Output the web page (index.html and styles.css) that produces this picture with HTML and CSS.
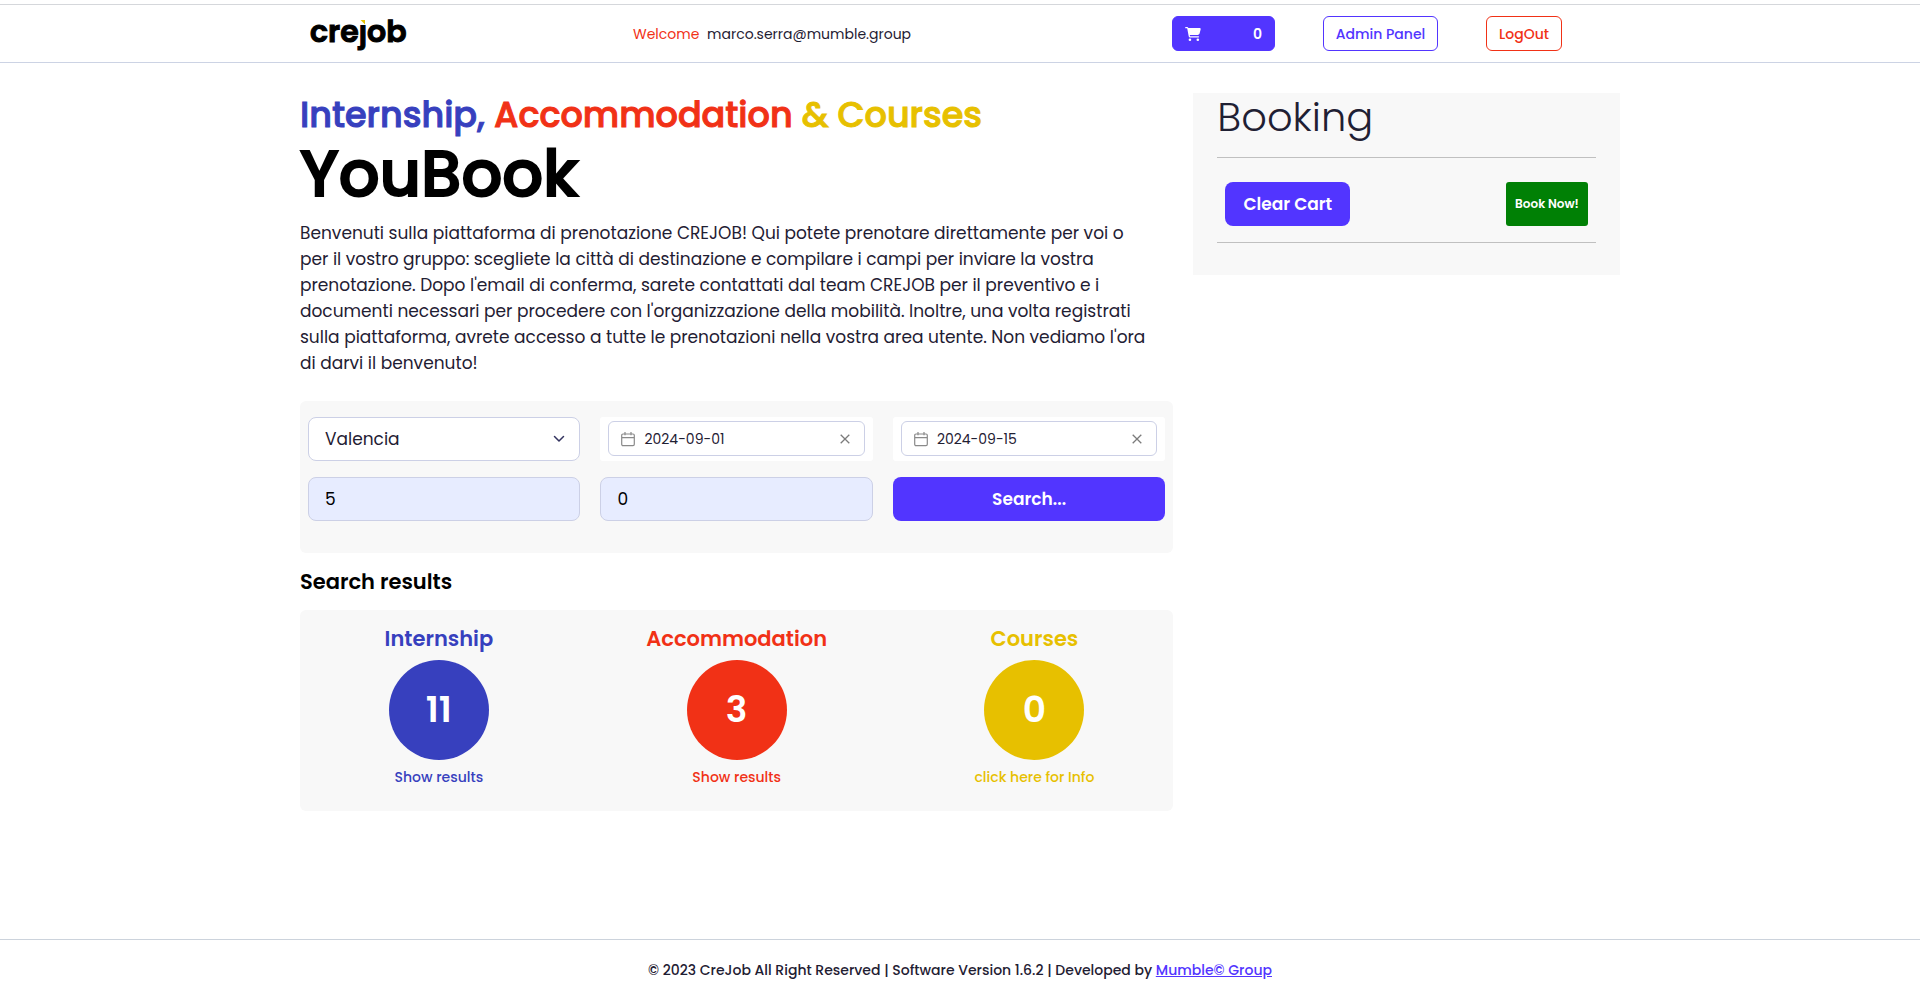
FILE: index.html
```html
<!DOCTYPE html>
<html lang="it">
<head>
<meta charset="utf-8">
<meta name="viewport" content="width=device-width, initial-scale=1">
<title>CreJob YouBook</title>
<link rel="stylesheet" href="styles.css">
</head>
<body>
<header class="site-header">
  <div class="container header-row">
    <a class="logo" href="#">cre<span class="logo-j">j</span>ob</a>
    <p class="welcome"><span class="red">Welcome</span> marco.serra@mumble.group</p>
    <nav class="actions">
      <button class="btn-small cart" type="button" aria-label="Cart">
        <svg width="16" height="14" viewBox="0 0 576 512" aria-hidden="true"><path fill="currentColor" d="M0 24C0 10.7 10.7 0 24 0H69.5c22 0 41.5 12.800 50.600 32h411c26.300 0 45.500 25 38.600 50.400l-41 152.300c-8.500 31.400-37 53.300-69.500 53.300H170.700l5.400 28.500c2.200 11.300 12.100 19.500 23.600 19.500H488c13.300 0 24 10.700 24 24s-10.700 24-24 24H199.700c-34.600 0-64.300-24.600-70.700-58.500L77.400 54.500c-.7-3.800-4-6.500-7.900-6.500H24C10.700 48 0 37.300 0 24zM128 464a48 48 0 1 1 96 0 48 48 0 1 1-96 0zm336-48a48 48 0 1 1 0 96 48 48 0 1 1 0-96z"/></svg>
        <span>0</span>
      </button>
      <button class="btn-small admin" type="button">Admin Panel</button>
      <button class="btn-small logout" type="button">LogOut</button>
    </nav>
  </div>
</header>

<main class="container layout">
  <div class="column">
    <h2 class="tagline"><span class="blue">Internship,</span> <span class="red">Accommodation</span> <span class="yellow">&amp; Courses</span></h2>
    <h1 class="title">YouBook</h1>
    <p class="intro">Benvenuti sulla piattaforma di prenotazione CREJOB! Qui potete prenotare direttamente per voi o<br>
      per il vostro gruppo: scegliete la città di destinazione e compilare i campi per inviare la vostra<br>
      prenotazione. Dopo l'email di conferma, sarete contattati dal team CREJOB per il preventivo e i<br>
      documenti necessari per procedere con l'organizzazione della mobilità. Inoltre, una volta registrati<br>
      sulla piattaforma, avrete accesso a tutte le prenotazioni nella vostra area utente. Non vediamo l'ora<br>
      di darvi il benvenuto!</p>

    <form class="panel search">
      <div class="select-wrap">
        <select class="field" aria-label="City"><option>Valencia</option></select>
        <svg class="chevron" width="12" height="8" viewBox="0 0 12 8" aria-hidden="true"><path d="M1.500 1.500 6 6l4.500-4.500" fill="none" stroke="#33335f" stroke-width="1.500" stroke-linecap="round" stroke-linejoin="round"/></svg>
      </div>
      <div class="date-wrap">
        <div class="date">
          <svg width="14" height="16" viewBox="0 0 14 16" aria-hidden="true"><path d="M2 3h10a1.300 1.300 0 0 1 1.300 1.300v9A1.300 1.300 0 0 1 12 14.600H2a1.300 1.300 0 0 1-1.300-1.300v-9A1.300 1.300 0 0 1 2 3zM.7 6.700h12.600M4 1v3.200M10 1v3.200" fill="none" stroke="#8a8a8a" stroke-width="1.200"/></svg>
          <input type="text" value="2024-09-01" aria-label="Start date">
          <button type="button" class="clear" aria-label="Clear start date"><svg width="10" height="10" viewBox="0 0 10 10"><path d="M.7.7l8.600 8.600M9.300.7.7 9.300" stroke="#7b7b7b" stroke-width="1.300"/></svg></button>
        </div>
      </div>
      <div class="date-wrap">
        <div class="date">
          <svg width="14" height="16" viewBox="0 0 14 16" aria-hidden="true"><path d="M2 3h10a1.300 1.300 0 0 1 1.300 1.300v9A1.300 1.300 0 0 1 12 14.600H2a1.300 1.300 0 0 1-1.300-1.300v-9A1.300 1.300 0 0 1 2 3zM.7 6.700h12.600M4 1v3.200M10 1v3.200" fill="none" stroke="#8a8a8a" stroke-width="1.200"/></svg>
          <input type="text" value="2024-09-15" aria-label="End date">
          <button type="button" class="clear" aria-label="Clear end date"><svg width="10" height="10" viewBox="0 0 10 10"><path d="M.7.7l8.600 8.600M9.300.7.7 9.300" stroke="#7b7b7b" stroke-width="1.300"/></svg></button>
        </div>
      </div>
      <input class="field filled" type="text" value="5" aria-label="Students">
      <input class="field filled" type="text" value="0" aria-label="Teachers">
      <button class="btn" type="button">Search...</button>
    </form>

    <h3 class="results-title">Search results</h3>
    <section class="panel results">
      <article class="result blue"><h4>Internship</h4><div class="count">11</div><a href="#">Show results</a></article>
      <article class="result red"><h4>Accommodation</h4><div class="count">3</div><a href="#">Show results</a></article>
      <article class="result yellow"><h4>Courses</h4><div class="count">0</div><a href="#">click here for Info</a></article>
    </section>
  </div>

  <aside class="column">
    <div class="booking">
      <h2>Booking</h2>
      <div class="booking-actions">
        <button class="btn" type="button">Clear Cart</button>
        <button class="book-now" type="button">Book Now!</button>
      </div>
    </div>
  </aside>
</main>

<footer class="site-footer">© 2023 CreJob All Right Reserved | Software Version 1.6.2 | Developed by <a href="#">Mumble© Group</a></footer>
</body>
</html>
```
FILE: styles.css
```css
* { box-sizing: border-box; }
body {
  margin: 0;
  min-height: 100vh;
  display: flex;
  flex-direction: column;
  background: #fff;
  color: #1f2033;
  font-family: Poppins, Inter, sans-serif;
  font-size: 14px;
  line-height: 20px;
}
h1, h2, h3, h4, p { margin: 0; }
button, input, select { font: inherit; color: inherit; }
button { cursor: pointer; padding: 0; border: 0; }
.blue { color: #3740be; }
.red { color: #f13116; }
.yellow { color: #e7c000; }
.container { width: 100%; max-width: 1340px; margin: 0 auto; }

.site-header {
  margin-top: 4px;
  border-top: 1px solid #d5d7db;
  border-bottom: 1px solid #ccd3e4;
}
.header-row {
  display: grid;
  grid-template-columns: 25% 1fr auto;
  align-items: center;
  min-height: 57px;
  padding: 0 68px 0 20px;
}
.logo {
  padding-bottom: 4px;
  color: #000;
  font-size: 30px;
  font-weight: 600;
  line-height: 36px;
  text-decoration: none;
  -webkit-text-stroke: 1px #000;
}
.logo-j { position: relative; }
.logo-j::before {
  content: "";
  position: absolute;
  top: 4px;
  left: 0;
  width: 100%;
  height: 11px;
  background: #fff;
}
.logo-j::after {
  content: "";
  position: absolute;
  top: 10px;
  right: 2px;
  width: 5px;
  height: 5px;
  background: #e7c000;
  clip-path: polygon(0 0, 100% 0, 100% 100%);
}
.welcome { padding-left: 10px; white-space: nowrap; }
.welcome .red { margin-right: 4px; }
.actions { display: flex; gap: 48px; }
.btn-small {
  height: 35px;
  border: 1px solid currentColor;
  border-radius: 6px;
  background: #fff;
  font-weight: 500;
  white-space: nowrap;
}
.cart {
  display: flex;
  align-items: center;
  justify-content: space-between;
  width: 103px;
  padding: 0 12px;
  background: #5235ff;
  border-color: #5235ff;
  color: #fff;
  font-weight: 600;
}
.admin { width: 115px; color: #5235ff; }
.logout { width: 76px; color: #f13116; }

.layout {
  display: grid;
  grid-template-columns: 2fr 1fr;
  align-items: start;
  padding-top: 30px;
}
.column { min-width: 0; padding: 0 10px; }
.tagline {
  font-size: 35px;
  font-weight: 500;
  line-height: 43px;
  -webkit-text-stroke: 1px;
}
.title {
  margin-bottom: 8px;
  color: #000;
  font-size: 64px;
  font-weight: 500;
  line-height: 76px;
  -webkit-text-stroke: 2px;
}
.intro {
  margin-bottom: 25px;
  font-size: 17px;
  line-height: 26px;
}
.panel { border-radius: 6px; background: #f8f8f8; }
.search {
  display: grid;
  grid-template-columns: repeat(3, minmax(0, 1fr));
  gap: 16px 20px;
  padding: 16px 8px 32px;
}
.select-wrap { position: relative; }
.chevron { position: absolute; right: 15px; top: 18px; pointer-events: none; }
.field {
  display: block;
  width: 100%;
  height: 44px;
  padding: 0 16px;
  border: 1px solid #ccd0e6;
  border-radius: 8px;
  background: #fff;
  font-size: 17px;
  appearance: none;
}
.filled { background: #e7ecff; color: #000; }
.date-wrap { padding: 4px 8px; border-radius: 3px; background: #fff; }
.date {
  display: flex;
  align-items: center;
  gap: 9px;
  height: 35px;
  padding: 0 14px 0 12px;
  border: 1px solid #ccd0e6;
  border-radius: 6px;
}
.date input { flex: 1; min-width: 0; padding: 0; border: 0; background: none; }
.clear { display: flex; background: none; }
.btn {
  height: 44px;
  border-radius: 8px;
  background: #5235ff;
  color: #fff;
  font-size: 17px;
  font-weight: 600;
}
.results-title {
  margin: 14px 0;
  color: #000;
  font-size: 21px;
  font-weight: 600;
  line-height: 29px;
}
.results {
  display: grid;
  grid-template-columns: repeat(3, minmax(0, 1fr));
  column-gap: 20px;
  padding: 16px 0 24px;
}
.result {
  display: flex;
  flex-direction: column;
  align-items: center;
}
.result h4 { margin-bottom: 8px; font-size: 21px; font-weight: 600; line-height: 26px; }
.result a { margin-top: 7px; color: inherit; font-weight: 500; text-decoration: none; }
.count {
  width: 100px;
  border-radius: 50%;
  background: currentColor;
  font-size: 36px;
  font-weight: 600;
  line-height: 100px;
  text-align: center;
}
.count::first-line { color: #fff; }

.booking { padding: 0 24px 32px; background: #f8f8f8; }
.booking h2 { padding-bottom: 16px; font-size: 40px; font-weight: 300; line-height: 48px; }
.booking-actions {
  display: flex;
  justify-content: space-between;
  padding: 24px 8px 16px;
  border-top: 1px solid #c0c0c0;
  border-bottom: 1px solid #c0c0c0;
}
.booking-actions .btn { width: 125px; }
.book-now {
  width: 82px;
  border-radius: 3px;
  background: #008005;
  color: #fff;
  font-size: 12px;
  font-weight: 600;
}

.site-footer {
  margin-top: auto;
  padding: 20px;
  border-top: 1px solid #ccd3dc;
  font-weight: 500;
  text-align: center;
}
.site-footer a { color: #5235ff; }
```
